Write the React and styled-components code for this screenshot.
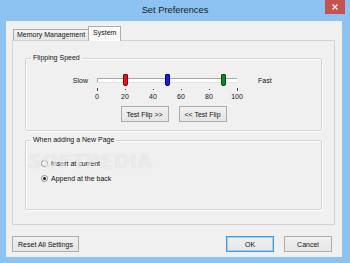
import React from 'react'
import styled, { createGlobalStyle, css } from 'styled-components'

const TICKS = [0, 20, 40, 60, 80, 100]
const THUMBS = [
    { value: 20, color: '#e41414', edge: '#8e0000' },
    { value: 50, color: '#1a1ae6', edge: '#00008e' },
    { value: 90, color: '#12891a', edge: '#00500a' },
]

export default function App() {
    return (
        <Window>
            <GlobalStyle />
            <TitleBar>
                <Title>Set Preferences</Title>
                <CloseButton aria-label="Close">
                    <svg width="6" height="6" viewBox="0 0 6 6">
                        <path d="M0.5 0.5L5.5 5.5M5.5 0.5L0.5 5.5" stroke="#fff" strokeWidth="1.3" />
                    </svg>
                </CloseButton>
            </TitleBar>
            <Client>
                <Tabs>
                    <Tab>Memory Management</Tab>
                    <Tab selected>System</Tab>
                </Tabs>
                <Panel>
                    <Group>
                        <Legend>Flipping Speed</Legend>
                        <SliderGrid>
                            <EndLabel>Slow</EndLabel>
                            <Slider>
                                <Track />
                                {THUMBS.map(t => (
                                    <Thumb
                                        key={t.value}
                                        $color={t.color}
                                        $edge={t.edge}
                                        style={{ left: `calc(${t.value}% - 2px)` }}
                                    />
                                ))}
                            </Slider>
                            <EndLabel $fast>Fast</EndLabel>
                            <span />
                            <Scale>
                                {TICKS.map((n, i) => (
                                    <Mark key={n}>
                                        <Tick $end={i === 0 || i === TICKS.length - 1} />
                                        <Number>{n}</Number>
                                    </Mark>
                                ))}
                            </Scale>
                        </SliderGrid>
                        <FlipButtons>
                            <Button $width={48}>Test Flip &gt;&gt;</Button>
                            <Button $width={48}>&lt;&lt; Test Flip</Button>
                        </FlipButtons>
                    </Group>
                    <Group $page>
                        <Legend>When adding a New Page</Legend>
                        <RadioList>
                            <RadioRow>
                                <Radio />
                                Insert at current
                            </RadioRow>
                            <RadioRow>
                                <Radio checked />
                                Append at the back
                            </RadioRow>
                        </RadioList>
                    </Group>
                </Panel>
                <Footer>
                    <Button $width={67}>Reset All Settings</Button>
                    <Button $width={48} $default>OK</Button>
                    <Button $width={48}>Cancel</Button>
                </Footer>
            </Client>
            <Watermark>SOFTPEDIA</Watermark>
        </Window>
    )
}

const GlobalStyle = createGlobalStyle`
    html, body {
        margin: 0;
        padding: 0;
    }
    body {
        font-family: "Liberation Sans", Arial, sans-serif;
        font-size: 7px;
        color: #111;
    }
`

const Window = styled.div`
    position: relative;
    width: 350px;
    height: 263px;
    background: #8cc3f0;
    display: flex;
    flex-direction: column;
    overflow: hidden;
`

const TitleBar = styled.div`
    height: 21px;
    display: grid;
    grid-template-columns: 1fr auto 1fr;
    align-items: start;
`

const Title = styled.div`
    grid-column: 2;
    line-height: 20px;
    font-size: 9.3px;
    color: #1a1a1a;
`

const CloseButton = styled.div`
    justify-self: end;
    width: 20px;
    height: 14px;
    margin-right: 5px;
    background: #c75050;
    display: flex;
    align-items: center;
    justify-content: center;
`

const Client = styled.div`
    flex: 1;
    margin: 0 8px 6px 6px;
    padding: 5px 7px 5px 6px;
    background: #f0f0f0;
    display: flex;
    flex-direction: column;
`

const Tabs = styled.div`
    display: flex;
    align-items: flex-end;
    height: 14px;
    padding-left: 1px;
    position: relative;
    z-index: 1;
`

const Tab = styled.div`
    height: 11px;
    line-height: 10px;
    padding: 0 3px;
    border: 1px solid #acacac;
    border-bottom: none;
    background: linear-gradient(#f2f2f2, #e6e6e6);
    box-sizing: border-box;
    white-space: nowrap;

    ${p => p.selected && css`
        height: 15px;
        line-height: 12px;
        margin-bottom: -1px;
        margin-left: -1px;
        padding: 0 4px;
        background: #fbfbfb;
    `}
`

const Panel = styled.div`
    height: 185px;
    box-sizing: border-box;
    border: 1px solid #d4d4d4;
    background: #f0f0f0;
    padding: 13px 12px 0;
    display: flex;
    flex-direction: column;
    gap: 5px;
`

const Group = styled.fieldset`
    margin: 0;
    min-width: 0;
    padding: 12px 0 8px;
    border: 1px solid #d2d2d2;
    border-radius: 2px;
    box-shadow: inset 1px 1px 0 #fff, 1px 1px 0 #fff;

    ${p => p.$page && css`
        padding-bottom: 23px;
    `}
`

const Legend = styled.legend`
    margin-left: 5px;
    padding: 0 2px;
    line-height: 8px;
`

const SliderGrid = styled.div`
    display: grid;
    grid-template-columns: 31px 140px auto;
    padding-left: 40px;
    align-items: center;
`

const EndLabel = styled.span`
    text-align: right;
    padding-right: 9px;

    ${p => p.$fast && css`
        text-align: left;
        padding: 0 0 0 21px;
    `}
`

const Slider = styled.div`
    position: relative;
    height: 12px;
    display: flex;
    align-items: center;
`

const Track = styled.div`
    width: 100%;
    height: 5px;
    box-sizing: border-box;
    background: #fff;
    border-top: 1px solid #a8a8a8;
    border-left: 1px solid #a8a8a8;
    border-bottom: 1px solid #e3e3e3;
`

const Thumb = styled.div`
    position: absolute;
    top: 0;
    width: 5px;
    height: 12px;
    box-sizing: border-box;
    border-radius: 1px 1px 2px 2px;
    background: ${p => p.$color};
    border: 1px solid ${p => p.$edge};
`

const Scale = styled.div`
    display: flex;
    justify-content: space-between;
    padding-top: 2px;
`

const Mark = styled.div`
    width: 0;
    display: flex;
    flex-direction: column;
    align-items: center;
`

const Tick = styled.div`
    width: 1px;
    height: 1px;
    margin: 1px 0;
    background: #444;

    ${p => p.$end && css`
        height: 3px;
        margin: 0;
    `}
`

const Number = styled.span`
    margin-top: 2px;
    line-height: 8px;
    white-space: nowrap;
`

const FlipButtons = styled.div`
    display: flex;
    justify-content: center;
    gap: 10px;
    margin-top: 5px;
`

const Button = styled.div`
    width: ${p => p.$width}px;
    height: 16px;
    box-sizing: border-box;
    border: 1px solid ${p => (p.$default ? '#3c9bea' : '#acacac')};
    background: linear-gradient(#f0f0f0, #e5e5e5);
    display: flex;
    align-items: center;
    justify-content: center;
    white-space: nowrap;
    ${p => p.$default && css`
        box-shadow: inset 0 0 0 1px #9fd0f7;
    `}
`

const RadioList = styled.div`
    display: flex;
    flex-direction: column;
    padding-left: 15px;
`

const RadioRow = styled.label`
    height: 15px;
    display: flex;
    align-items: center;
    gap: 3px;
`

const Radio = styled.span`
    width: 7px;
    height: 7px;
    box-sizing: border-box;
    border-radius: 50%;
    border: 1px solid #8a8a8a;
    background: #fff;
    display: flex;
    align-items: center;
    justify-content: center;

    &::after {
        content: '';
        width: 3px;
        height: 3px;
        border-radius: 50%;
        background: ${p => (p.checked ? '#1a1a1a' : 'transparent')};
    }
`

const Footer = styled.div`
    display: flex;
    gap: 10px;
    margin-top: 11px;
    padding-right: 3px;

    & > :nth-child(2) {
        margin-left: auto;
    }
`

const Watermark = styled.div`
    position: absolute;
    left: 28px;
    top: 150px;
    font-family: "DejaVu Sans", sans-serif;
    font-weight: bold;
    font-size: 19px;
    letter-spacing: 0.5px;
    color: rgba(255, 255, 255, 0.55);
    text-shadow: 0 0 1px rgba(120, 120, 120, 0.25);
    pointer-events: none;
`
